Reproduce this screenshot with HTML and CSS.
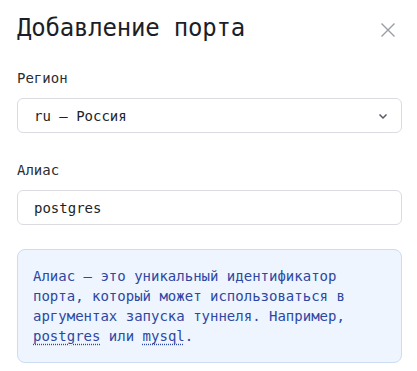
FILE: index.html
```html
<!DOCTYPE html>
<html lang="ru">
<head>
    <meta charset="UTF-8">
    <meta name="viewport" content="width=device-width, initial-scale=1.0">
    <title>Добавление порта</title>
    <link rel="stylesheet" href="styles.css">
</head>
<body>
    <div class="dialog">
        <div class="header">
            <h1 class="title">Добавление порта</h1>
            <button class="close" aria-label="Закрыть">
                <svg width="16" height="16" viewBox="0 0 16 16">
                    <path d="M1.5 1.5L14.5 14.5M14.5 1.5L1.5 14.5" stroke="#9a9ca6" stroke-width="1.4" fill="none"/>
                </svg>
            </button>
        </div>

        <div class="field">
            <label class="label">Регион</label>
            <div class="select">
                <span>ru – Россия</span>
                <svg width="12" height="12" viewBox="0 0 12 12">
                    <path d="M2.5 4.5L6 8L9.5 4.5" stroke="#555a66" stroke-width="1.5" fill="none"/>
                </svg>
            </div>
        </div>

        <div class="field">
            <label class="label">Алиас</label>
            <input class="input" type="text" value="postgres">
        </div>

        <div class="info">
            Алиас – это уникальный идентификатор порта, который может использоваться в аргументах запуска туннеля. Например, <span class="code">postgres</span> или <span class="code">mysql</span>.
        </div>
    </div>
</body>
</html>
```

FILE: styles.css
```css
body{
    margin: 0;
    background: #fff;
    font-family: "DejaVu Sans Mono", "Liberation Mono", monospace;
    color: #1c1f27;
}
.dialog{
    padding: 12px 15px 0 17px;
}
.header{
    display: flex;
    align-items: center;
    justify-content: space-between;
    height: 32px;
}
.title{
    margin: 0;
    font-size: 24px;
    font-weight: normal;
    line-height: 32px;
    letter-spacing: -0.2px;
}
.close{
    border: none;
    background: none;
    padding: 0;
    width: 16px;
    height: 16px;
    margin-right: 6px;
    margin-top: 4px;
    cursor: pointer;
}
.field{
    margin-top: 24px;
}
.field + .field{
    margin-top: 27px;
}
.label{
    display: block;
    font-size: 14px;
    line-height: 20px;
    color: #2b2d33;
    margin-bottom: 10px;
}
.select, .input{
    box-sizing: border-box;
    width: 385px;
    height: 35px;
    border: 1px solid #dadce2;
    border-radius: 6px;
    font-family: inherit;
    font-size: 14px;
    color: #1c1f27;
    background: #fff;
}
.select{
    display: flex;
    align-items: center;
    justify-content: space-between;
    padding: 0 12px 0 16px;
}
.input{
    display: block;
    padding: 0 16px;
    outline: none;
}
.info{
    box-sizing: border-box;
    width: 385px;
    margin-top: 24px;
    padding: 16px 15px;
    border: 1px solid #cbdcf3;
    border-radius: 8px;
    background: #eef5fe;
    color: #2d47a3;
    font-size: 14px;
    line-height: 20px;
}
.code{
    text-decoration: underline dotted;
    text-underline-offset: 3px;
}
```
